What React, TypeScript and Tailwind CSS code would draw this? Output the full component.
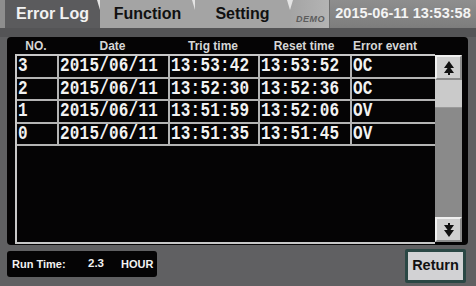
import React from "react";

const rows = [
  ["3", "2015/06/11", "13:53:42", "13:53:52", "OC"],
  ["2", "2015/06/11", "13:52:30", "13:52:36", "OC"],
  ["1", "2015/06/11", "13:51:59", "13:52:06", "OV"],
  ["0", "2015/06/11", "13:51:35", "13:51:45", "OV"],
];

const headers = ["NO.", "Date", "Trig time", "Reset time", "Error event"];
const cols = "grid grid-cols-[42px_111px_90px_92px_80px]";

function Arrow({ down = false }: { down?: boolean }) {
  return (
    <svg width="12" height="14" viewBox="0 0 12 14" className={down ? "rotate-180" : ""}>
      <path d="M6 0 L11 7 L1 7 Z M6 5 L11 12 L1 12 Z" fill="#111" />
      <rect x="5" y="11" width="2" height="3" fill="#111" />
    </svg>
  );
}

function Tab({ label, active, w }: { label: string; active?: boolean; w: string }) {
  return (
    <div
      className={`relative flex h-full items-center justify-center ${w} ${
        active ? "bg-[#5b5b5d] text-[#f2f2f2]" : "bg-[#a4a4a4] text-[#111]"
      } text-[16px] font-bold`}
    >
      {label}
      <div className="absolute -right-[3px] top-0 h-0 w-0 border-x-[3px] border-t-[10px] border-x-transparent border-t-[#e4e4e4]" />
    </div>
  );
}

export default function App() {
  return (
    <div
      className="flex h-[286px] w-[476px] flex-col overflow-hidden bg-[#606062]"
      style={{ fontFamily: '"Liberation Sans", Arial, sans-serif' }}
    >
      {/* top bar */}
      <div className="flex h-[28px] bg-[#9d9d9d]">
        <div className="w-[5px] bg-[#8e8e8e]" />
        <Tab label="Error Log" active w="w-[95px]" />
        <Tab label="Function" w="w-[95px]" />
        <Tab label="Setting" w="w-[95px]" />
        <div className="flex w-[39px] items-end justify-end bg-gradient-to-r from-[#a4a4a4] to-[#b4b4b4] pb-[2px] pr-[4px]">
          <span className="text-[9px] font-bold italic tracking-[0.5px] text-[#5c5c5c]">DEMO</span>
        </div>
        <div className="flex flex-1 items-center justify-center border-l border-[#6e6e6e] bg-gradient-to-b from-[#8e8e8e] to-[#7d7d7d] text-[14.5px] font-bold text-[#f4f4f4]">
          2015-06-11 13:53:58
        </div>
      </div>
      <div className="h-[9px] bg-[#545456]" />

      {/* main panel */}
      <div className="mx-[7px] flex h-[208px] w-[461px] flex-col rounded-[4px] bg-[#050405] pl-[8px] pr-[6px]">
        <div className={`${cols} h-[17px] items-center text-[12px] font-bold text-[#d6d6d6]`}>
          {headers.map((h, i) => (
            <div key={h} className={i === 4 ? "pr-[10px] text-center" : "text-center"}>
              {h}
            </div>
          ))}
        </div>
        <div className="flex">
          <div className="h-[190px] w-[420px] border-2 border-[#c8c8c8] border-r-0">
            {rows.map((r, i) => (
              <div key={i} className={`${cols} h-[22.5px] border-b-2 border-[#b4b4b4]`}>
                {r.map((c, j) => (
                  <div
                    key={j}
                    className={`flex items-center overflow-hidden pl-[1px] text-[16px] font-bold leading-none tracking-[0.2px] text-[#f2f2f2] ${
                      j < 4 ? "border-r-2 border-[#b4b4b4]" : ""
                    }`}
                    style={{ fontFamily: '"Liberation Mono", "Courier New", monospace' }}
                  >
                    <span className="inline-block scale-y-[1.3]">{c}</span>
                  </div>
                ))}
              </div>
            ))}
          </div>
          <div className="mt-[1px] flex h-[187px] w-[27px] flex-col bg-[#8a8a8a]">
            <div className="flex h-[25px] items-center justify-center border-2 border-b-[#8c8c8c] border-l-[#f0f0f0] border-r-[#8c8c8c] border-t-[#f0f0f0] bg-[#cfcfcf]">
              <Arrow />
            </div>
            <div className="h-[28px] border-b border-[#9a9a9a] bg-[#cacaca]" />
            <div className="flex-1" />
            <div className="flex h-[25px] items-center justify-center border-2 border-b-[#8c8c8c] border-l-[#f0f0f0] border-r-[#8c8c8c] border-t-[#f0f0f0] bg-[#cfcfcf]">
              <Arrow down />
            </div>
          </div>
        </div>
      </div>

      {/* bottom */}
      <div className="flex items-start justify-between pl-[7px] pr-[10px]">
        <div className="mt-[6px] flex h-[26px] w-[150px] items-center rounded-[3px] bg-[#050405] pl-[5px] text-[11px] font-bold text-[#f2f2f2]">
          <span className="w-[76px]">Run Time:</span>
          <span className="w-[33px] text-[11.5px]">2.3</span>
          <span>HOUR</span>
        </div>
        <div className="mt-[4px] flex h-[34px] w-[61px] items-center justify-center rounded-[2px] border-[3px] border-[#2a4744] bg-[#d2d2d4] text-[14.5px] font-bold text-[#111]">
          Return
        </div>
      </div>
    </div>
  );
}
